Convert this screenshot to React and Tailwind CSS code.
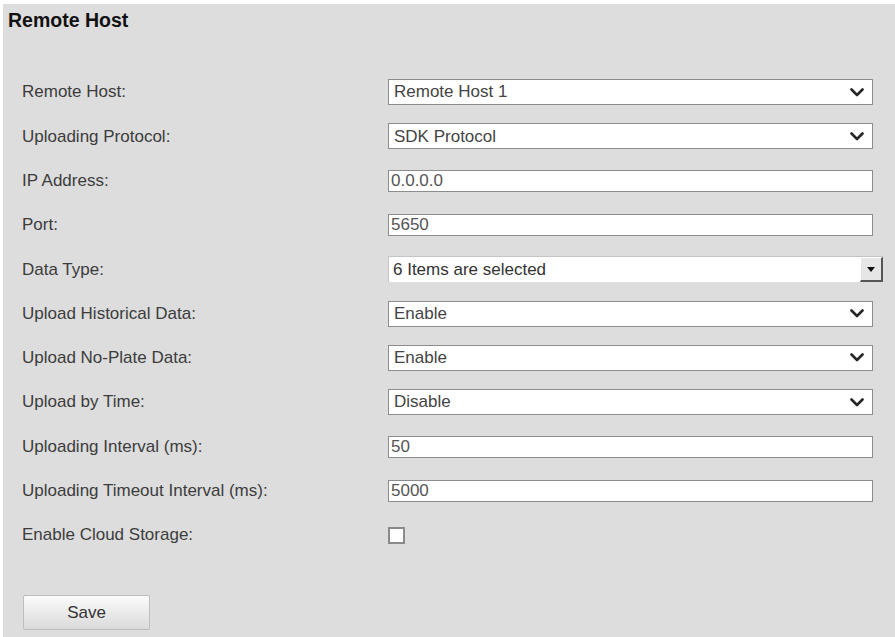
import React from 'react';

const rows = [
  { label: 'Remote Host:', type: 'select', value: 'Remote Host 1' },
  { label: 'Uploading Protocol:', type: 'select', value: 'SDK Protocol' },
  { label: 'IP Address:', type: 'text', value: '0.0.0.0' },
  { label: 'Port:', type: 'text', value: '5650' },
  { label: 'Data Type:', type: 'multi', value: '6 Items are selected' },
  { label: 'Upload Historical Data:', type: 'select', value: 'Enable' },
  { label: 'Upload No-Plate Data:', type: 'select', value: 'Enable' },
  { label: 'Upload by Time:', type: 'select', value: 'Disable' },
  { label: 'Uploading Interval (ms):', type: 'text', value: '50' },
  { label: 'Uploading Timeout Interval (ms):', type: 'text', value: '5000' },
  { label: 'Enable Cloud Storage:', type: 'check' },
];

const Chevron = () => (
  <svg width="14" height="9" viewBox="0 0 14 9" fill="none">
    <path d="M1.5 1.5 L7 7 L12.5 1.5" stroke="#262626" strokeWidth="2.6" strokeLinecap="round" strokeLinejoin="round" />
  </svg>
);

const Field = ({ row }) => {
  if (row.type === 'select') {
    return (
      <div className="w-[485px] h-[26px] bg-white border border-[#8c8c8c] flex items-center justify-between pl-[5px] pr-[8px] text-[#444]">
        <span>{row.value}</span>
        <Chevron />
      </div>
    );
  }
  if (row.type === 'text') {
    return (
      <input
        readOnly
        value={row.value}
        className="w-[485px] h-[22px] bg-white border border-[#8c8c8c] pl-[2px] text-[#555] outline-none"
      />
    );
  }
  if (row.type === 'multi') {
    return (
      <div className="w-[495px] h-[26px] flex bg-white border-t border-l border-[#c4c4c4]">
        <span className="flex-1 flex items-center pl-[4px] text-[#333]">{row.value}</span>
        <div className="w-[23px] h-full bg-[#e6e6e6] border-t border-l border-white border-r-2 border-b-2 border-r-[#555] border-b-[#555] flex items-center justify-center">
          <svg width="8" height="5" viewBox="0 0 8 5">
            <path d="M0 0 L8 0 L4 5 Z" fill="#111" />
          </svg>
        </div>
      </div>
    );
  }
  return <div className="w-[17px] h-[17px] bg-white border-2 border-[#8a8a8a]" />;
};

export default function App() {
  return (
    <div className="w-[895px] h-[637px] bg-white overflow-hidden" style={{ fontFamily: '"Liberation Sans", Arial, sans-serif' }}>
      <div className="mt-[4px] ml-[3px] h-[633px] bg-[#dddddd] flex flex-col">
        <h1 className="pl-[5px] pt-[4px] h-[66px] text-[19.5px] font-bold text-[#111] leading-[24px]">Remote Host</h1>
        <div className="flex flex-col">
          {rows.map((row) => (
            <div key={row.label} className="h-[44.3px] flex items-center text-[17px]">
              <span className="w-[385px] pl-[19px] text-[#3c3c3c]">{row.label}</span>
              <Field row={row} />
            </div>
          ))}
        </div>
        <div className="pl-[20px] pt-[38px]">
          <button className="w-[127px] h-[35px] rounded-[2px] border border-[#bdbdbd] bg-gradient-to-b from-[#fbfbfb] to-[#dadada] text-[17px] text-[#333]">
            Save
          </button>
        </div>
      </div>
    </div>
  );
}
